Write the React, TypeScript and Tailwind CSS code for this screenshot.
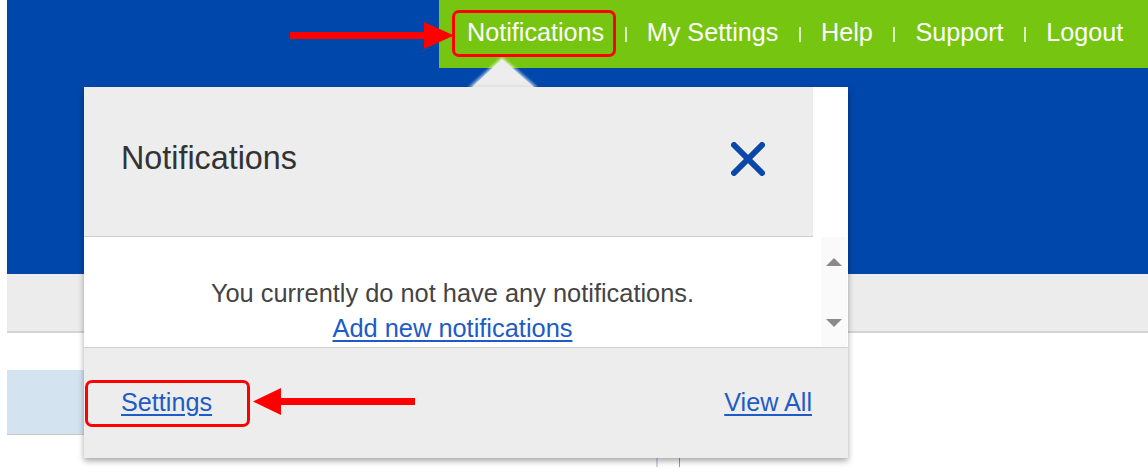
import React from "react";

const navItems = ["Notifications", "My Settings", "Help", "Support", "Logout"];

function Sep() {
  return <span className="block w-[2px] h-[15px] bg-[#dcefc2]" />;
}

export default function App() {
  return (
    <div className="relative w-[1148px] h-[469px] overflow-hidden bg-white font-['Liberation_Sans',Arial,sans-serif]">
      {/* Background page */}
      <div className="ml-[7px] flex flex-col">
        <div className="h-[274px] bg-[#0047ab] flex flex-col">
          <nav className="ml-auto h-[68px] w-[709px] bg-[#76c510] flex items-center pl-[28px] gap-[20.3px] text-white text-[25.2px] leading-none">
            {navItems.map((item, i) => (
              <React.Fragment key={item}>
                {i > 0 && <Sep />}
                <span className="pb-[2px]">{item}</span>
              </React.Fragment>
            ))}
          </nav>
        </div>
        <div className="h-[59px] bg-[#ececec] border-b-2 border-[#d4d4d4]" />
        <div className="mt-[37px] h-[65px] w-[240px] bg-[#d4e3f0] border-b border-[#c8c8c8]" />
        <div className="mt-[18px] ml-[649px] flex gap-[21px]">
          <span className="block w-[2px] h-[14px] bg-[#c9d9ea]" />
          <span className="block w-[1px] h-[14px] bg-[#9a9a9a]" />
        </div>
      </div>

      {/* Caret */}
      <svg className="absolute left-[462px] top-[52px]" width="82" height="40" viewBox="0 0 82 40">
        <defs>
          <filter id="blur" x="-20%" y="-20%" width="140%" height="140%">
            <feGaussianBlur stdDeviation="1.6" />
          </filter>
        </defs>
        <polygon points="40,5 6,36 76,36" fill="#ffffff" opacity="0.7" filter="url(#blur)" />
        <polygon points="40,7 9,36 73,36" fill="#ededed" />
      </svg>

      {/* Popup panel */}
      <div className="absolute left-[84px] top-[87px] w-[764px] h-[371px] bg-white flex flex-col shadow-[0_3px_6px_rgba(0,0,0,0.35)]">
        <div className="flex h-[150px]">
          <div className="w-[729px] bg-[#ededed] border-b border-[#cfcfcf] flex items-center justify-between pl-[37px] pr-[48px] pb-[6px]">
            <span className="text-[32.3px] text-[#333333]">Notifications</span>
            <svg width="34" height="34" viewBox="0 0 34 34">
              <path d="M3 3 L31 31 M31 3 L3 31" stroke="#0b47a8" strokeWidth="6" strokeLinecap="round" />
            </svg>
          </div>
          <div className="flex-1 bg-white" />
        </div>
        <div className="flex h-[110px]">
          <div className="w-[737px] flex flex-col items-center pt-[39px] text-[25.4px] leading-[35px]">
            <span className="text-[#444444]">You currently do not have any notifications.</span>
            <a className="text-[#1e5bc6] underline underline-offset-[3px]">Add new notifications</a>
          </div>
          <div className="w-[26px] bg-[#fafafa] flex flex-col items-center justify-between pt-[21px] pb-[20px]">
            <span className="w-0 h-0 border-l-[8px] border-r-[8px] border-b-[8px] border-l-transparent border-r-transparent border-b-[#8a8a8a]" />
            <span className="w-0 h-0 border-l-[8px] border-r-[8px] border-t-[8px] border-l-transparent border-r-transparent border-t-[#8a8a8a]" />
          </div>
          <div className="flex-1" />
        </div>
        <div className="flex-1 bg-[#ededed] border-t border-[#d0d0d0] flex items-center justify-between pl-[37px] pr-[36px] text-[25.2px] text-[#1e5bc6]">
          <a className="underline underline-offset-[3px]">Settings</a>
          <a className="underline underline-offset-[3px]">View All</a>
        </div>
      </div>

      {/* Annotations */}
      <div className="absolute left-[452px] top-[10px] w-[164px] h-[47px] border-[3px] border-[#ff0000] rounded-[7px]" />
      <div className="absolute left-[85px] top-[380px] w-[165px] h-[47px] border-[3px] border-[#ff0000] rounded-[7px]" />
      <svg className="absolute left-[288px] top-[20px]" width="168" height="32" viewBox="0 0 168 32">
        <rect x="2" y="12" width="138" height="7" fill="#ff0000" />
        <polygon points="136,2 166,15.5 136,29" fill="#ff0000" />
      </svg>
      <svg className="absolute left-[251px] top-[387px]" width="166" height="32" viewBox="0 0 166 32">
        <rect x="27" y="11" width="137" height="7" fill="#ff0000" />
        <polygon points="2,14.5 30,1 30,28" fill="#ff0000" />
      </svg>
    </div>
  );
}
